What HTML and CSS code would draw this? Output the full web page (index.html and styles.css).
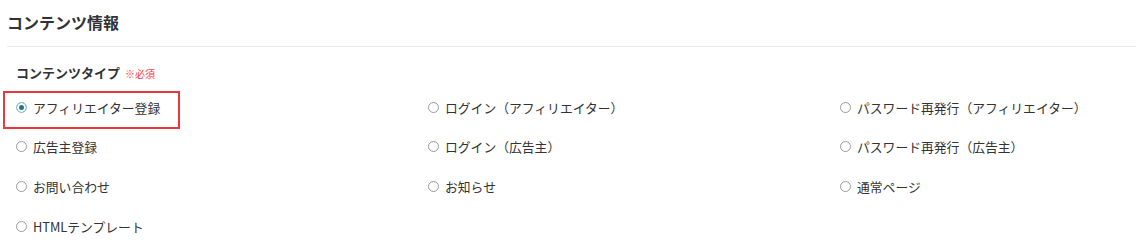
FILE: index.html
```html
<!DOCTYPE html>
<html lang="ja">
<head>
<meta charset="utf-8">
<link rel="stylesheet" href="styles.css">
</head>
<body>
<div class="panel">
  <h2 class="panel-title">コンテンツ情報</h2>
  <div class="field">
    <div class="field-label">コンテンツタイプ <span class="req">※必須</span></div>
    <div class="options">
      <label class="opt highlighted"><span class="radio checked"></span><span class="txt">アフィリエイター登録</span></label>
      <label class="opt"><span class="radio"></span><span class="txt">ログイン（アフィリエイター）</span></label>
      <label class="opt"><span class="radio"></span><span class="txt">パスワード再発行（アフィリエイター）</span></label>
      <label class="opt"><span class="radio"></span><span class="txt">広告主登録</span></label>
      <label class="opt"><span class="radio"></span><span class="txt">ログイン（広告主）</span></label>
      <label class="opt"><span class="radio"></span><span class="txt">パスワード再発行（広告主）</span></label>
      <label class="opt"><span class="radio"></span><span class="txt">お問い合わせ</span></label>
      <label class="opt"><span class="radio"></span><span class="txt">お知らせ</span></label>
      <label class="opt"><span class="radio"></span><span class="txt">通常ページ</span></label>
      <label class="opt"><span class="radio"></span><span class="txt">HTMLテンプレート</span></label>
    </div>
  </div>
</div>
</body>
</html>
```
FILE: styles.css
```css
html, body {
  margin: 0;
  padding: 0;
  background: #fff;
}
body {
  font-family: "Noto Sans CJK JP", "Noto Sans", sans-serif;
  color: #333;
  overflow: hidden;
}
.panel {
  padding-left: 7px;
}
.panel-title {
  margin: 0;
  padding: 10px 0 12px;
  font-size: 16px;
  line-height: 24px;
  font-weight: 700;
  color: #333;
  border-bottom: 1px solid #ebebeb;
}
.field {
  padding-left: 9px;
}
.field-label {
  margin-top: 16px;
  font-size: 13px;
  line-height: 20px;
  font-weight: 600;
  color: #333;
}
.req {
  font-size: 10px;
  font-weight: 400;
  color: #ff3b3b;
  margin-left: 2px;
}
.options {
  margin-top: 4px;
  display: grid;
  grid-template-columns: 412px 412px minmax(0, 1fr);
  grid-auto-rows: 39.6px;
}
.opt {
  position: relative;
  display: flex;
  align-items: center;
  gap: 6px;
  font-size: 12.8px;
  line-height: 20px;
  color: #333;
  white-space: nowrap;
  min-width: 0;
}
.radio {
  width: 11px;
  height: 11px;
  border: 1px solid #9a9a9a;
  border-radius: 50%;
  box-sizing: border-box;
  background: #fff;
  flex: none;
  margin-top: -1px;
}
.radio.checked {
  border-color: #9cc3ca;
  background: #1f7686;
  box-shadow: inset 0 0 0 2px #fff;
}
.highlighted::after {
  content: "";
  position: absolute;
  left: -13px;
  top: 3px;
  width: 177px;
  height: 38px;
  box-sizing: border-box;
  border: 2px solid #e8383d;
}
```
